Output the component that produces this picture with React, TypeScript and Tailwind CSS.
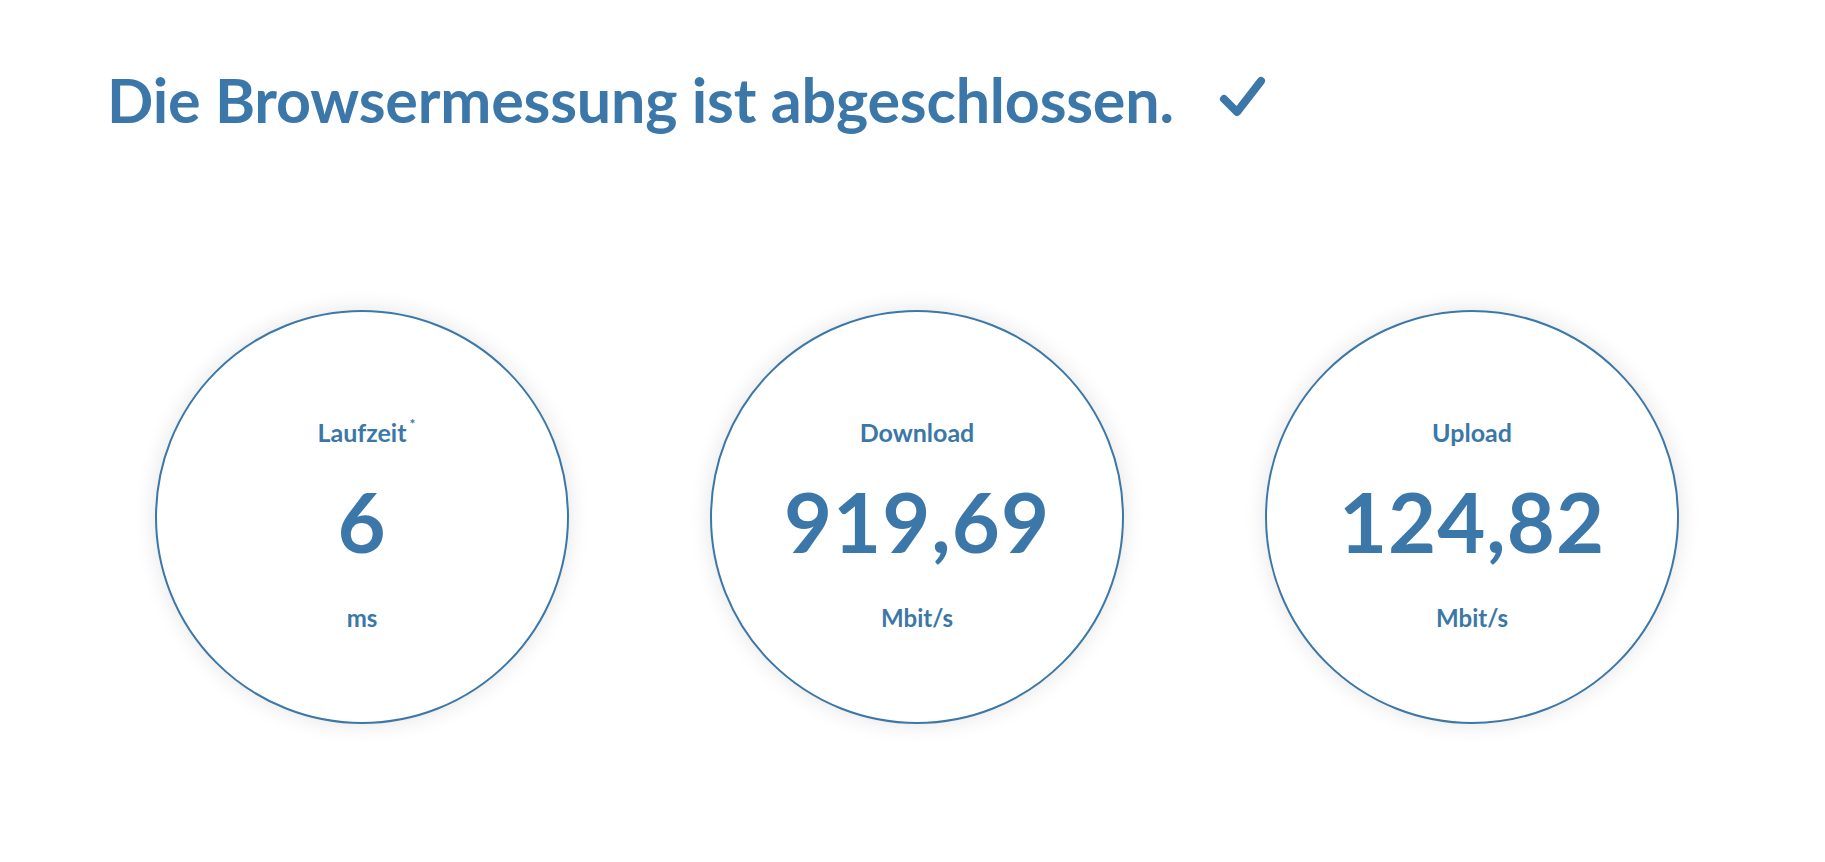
import React from "react";

type Result = {
  label: string;
  star?: boolean;
  value: string;
  unit: string;
};

const results: Result[] = [
  { label: "Laufzeit", star: true, value: "6", unit: "ms" },
  { label: "Download", value: "919,69", unit: "Mbit/s" },
  { label: "Upload", value: "124,82", unit: "Mbit/s" },
];

const ResultCircle: React.FC<{ r: Result }> = ({ r }) => (
  <div className="w-[414px] h-[414px] shrink-0 rounded-full border-2 border-[#3b77a8] bg-white shadow-[0_0_22px_rgba(0,0,0,0.11)] flex flex-col items-center justify-center pt-[16px] text-[#3b77a8]">
    <p className="text-[25px] font-bold leading-none relative">
      {r.label}
      {r.star && <span className="absolute -right-[9px] -top-[3px] text-[14px]">*</span>}
    </p>
    <p className="text-[83px] font-bold leading-none mt-[35px] tracking-[1px]">{r.value}</p>
    <p className="text-[24px] font-bold leading-none mt-[43px]">{r.unit}</p>
  </div>
);

export default function App() {
  return (
    <div className="w-[1825px] h-[862px] bg-white font-['Lato','Liberation_Sans',sans-serif] overflow-hidden">
      <div className="pl-[107px] pt-[69px] flex items-center">
        <h1 className="text-[61px] font-bold text-[#3b77a8] leading-none tracking-[-0.2px]">
          Die Browsermessung ist abgeschlossen.
        </h1>
        <svg className="ml-[44px] mt-[-6px]" width="50" height="44" viewBox="0 0 50 44" fill="none">
          <path d="M6 24 L19 37 L43 6" stroke="#3b77a8" strokeWidth="8" strokeLinecap="round" strokeLinejoin="round" />
        </svg>
      </div>
      <div className="flex gap-[141px] pl-[155px] mt-[180px]">
        {results.map((r) => (
          <ResultCircle key={r.label} r={r} />
        ))}
      </div>
    </div>
  );
}
